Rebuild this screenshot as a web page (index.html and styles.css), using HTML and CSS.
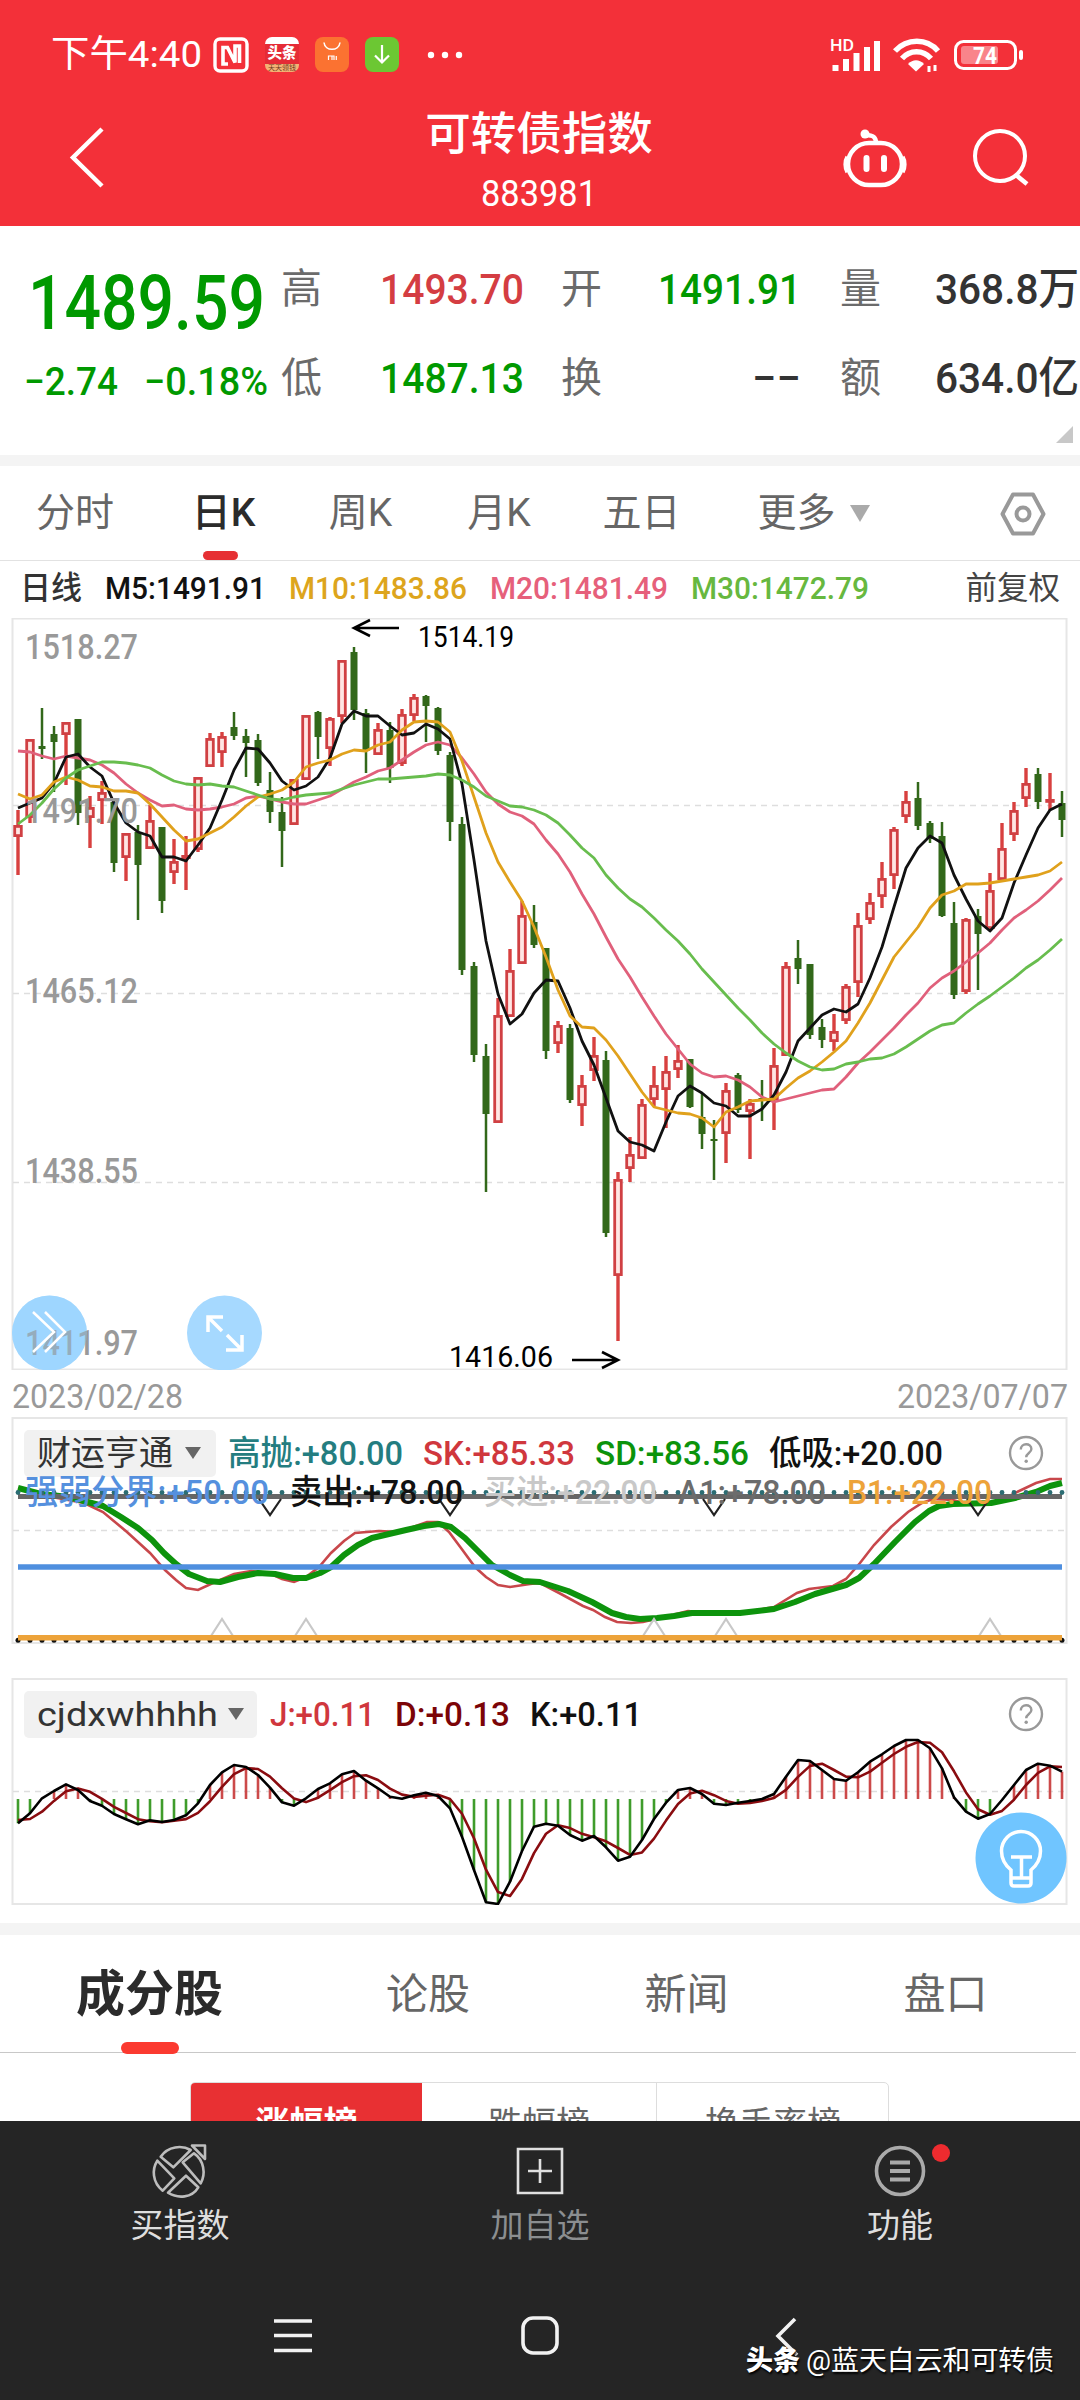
FILE: index.html
```html
<!DOCTYPE html>
<html lang="zh-CN">
<head>
<meta charset="utf-8">
<title>可转债指数 883981</title>
<link rel="stylesheet" href="styles.css">
</head>
<body>
<div class="phone">
  <header class="top">
    <div class="status">
      <span class="clock" data-width="151">下午4:40</span>
      <svg class="st-icon nfc" width="36" height="36" viewBox="0 0 36 36"><rect x="2" y="2" width="32" height="32" rx="5" fill="none" stroke="#fff" stroke-width="3.400"/><path d="M15 27H10V10.500H14.500L22 25.500V9H26.500V26" fill="none" stroke="#fff" stroke-width="3.600"/></svg>
      <span class="app news"><b>头条</b><i>天天领钱</i></span>
      <svg class="st-icon" width="34" height="35" viewBox="0 0 34 35"><rect width="34" height="35" rx="8" fill="#fb7231"/><path d="M9 5.500c1 9 15 9 16 0" fill="none" stroke="#fff" stroke-width="1.600"/><path d="M13.500 23v-4h3.500v4M17 19h2v4M21.300 19v4" fill="none" stroke="#fff" stroke-width="1.200"/></svg>
      <svg class="st-icon" width="34" height="35" viewBox="0 0 34 35"><rect width="34" height="35" rx="8" fill="#6cc733"/><path d="M17 8v17M10 18.500l7 7 7-7" fill="none" stroke="#fff" stroke-width="2.200"/></svg>
      <svg class="more-dots" width="36" height="8" viewBox="0 0 36 8"><circle cx="4" cy="4" r="3.200"/><circle cx="18" cy="4" r="3.200"/><circle cx="32" cy="4" r="3.200"/></svg>
      <svg class="signals" width="200" height="40" viewBox="826 34 200 40">
        <text x="830" y="50" class="hd" textLength="24" lengthAdjust="spacingAndGlyphs">HD</text>
        <path d="M835.500 70v-6M846 70v-12M856.500 70v-18M867 70v-24M877 70v-30" stroke="#fff" stroke-width="6" stroke-linecap="butt"/>
        <path d="M895 50c12-13 32-13 43 0M902 57.500c8-9 21-9 29 0" fill="none" stroke="#fff" stroke-width="5.500"/><path d="M908 63c5-5 11-5 16 0l-8 7.500z" fill="#fff"/><path d="M929 65v6M935 64v6" stroke="#fff" stroke-width="3"/>
        <rect x="955.500" y="40.500" width="60" height="27" rx="8" fill="none" stroke="#fff" stroke-width="3"/><rect x="961" y="45" width="37" height="18" rx="3" fill="#f9848a"/><rect x="1019" y="49" width="4" height="10" rx="2" fill="#fff"/>
        <text x="973" y="63" class="pct" textLength="24" lengthAdjust="spacingAndGlyphs">74</text>
      </svg>
    </div>
    <div class="titlebar">
      <svg class="back" width="40" height="64" viewBox="66 125 40 64"><path d="M102 129L73 157.500l29 28.500" fill="none" stroke="#fff" stroke-width="4.500"/></svg>
      <div class="title"><h1>可转债指数</h1><span data-width="116">883981</span></div>
      <svg width="70" height="64" viewBox="840 126 70 64"><g fill="none" stroke="#fff" stroke-width="4.500"><rect x="848" y="144" width="54" height="42" rx="21"/><path d="M866 136c8 0 10 3 10 8"/><path d="M866.500 159v11M884 159v11" stroke-width="6" stroke-linecap="round"/><path d="M847.500 158c-2.500 4-2.500 11 0 15M902.500 158c2.500 4 2.500 11 0 15"/></g><circle cx="865" cy="135" r="4.500" fill="#fff"/></svg>
      <svg class="search" width="60" height="64" viewBox="970 127 60 64"><circle cx="1000" cy="158" r="25" fill="none" stroke="#fff" stroke-width="4"/><path d="M1016 177l11 9" stroke="#fff" stroke-width="4.500"/></svg>
    </div>
  </header>

  <section class="quote">
    <div class="last">
      <div class="price"><span data-width="237">1489.59</span></div>
      <div class="change"><span data-width="94">−2.74</span><span data-width="124">−0.18%</span></div>
    </div>
    <dl class="stats">
      <dt>高</dt><dd class="up"><span data-width="144">1493.70</span></dd>
      <dt>开</dt><dd class="down"><span data-width="143">1491.91</span></dd>
      <dt>量</dt><dd><span data-width="144">368.8万</span></dd>
      <dt>低</dt><dd class="down"><span data-width="144">1487.13</span></dd>
      <dt>换</dt><dd><span data-width="49">−−</span></dd>
      <dt>额</dt><dd><span data-width="144">634.0亿</span></dd>
    </dl>
    <i class="corner"></i>
  </section>
  <div class="band"></div>

  <nav class="periods">
    <span>分时</span><span class="on">日K</span><span>周K</span><span>月K</span><span>五日</span><span class="more">更多<i></i></span>
    <svg width="46" height="44" viewBox="0 0 46 44"><path d="M13 2.500h20L43.500 22 33 41.500H13L2.500 22z" fill="none" stroke="#999" stroke-width="4" stroke-linejoin="round"/><circle cx="23" cy="22" r="6.500" fill="none" stroke="#999" stroke-width="4"/></svg>
  </nav>

  <div class="ma-row">
    <span class="c-dark" data-width="62">日线</span><span class="c-black" data-width="161">M5:1491.91</span><span class="c-gold" data-width="178">M10:1483.86</span><span class="c-pink" data-width="178">M20:1481.49</span><span class="c-lime" data-width="178">M30:1472.79</span><span class="adjust">前复权</span>
  </div>

  <div class="pane kline">
    <svg id="kline" width="1080" height="752" viewBox="0 618 1080 752">
      <rect x="12.500" y="618.500" width="1054" height="751" fill="#fff" stroke="#e6e6e6" stroke-width="2"/>
      <path class="grid" d="M13 805.500H1066M13 993.500H1066M13 1182.500H1066"/>
      <g id="candles"></g>
      <g id="averages" fill="none" stroke-width="2.800" stroke-linejoin="round"></g>
      <circle cx="49.500" cy="1333" r="37.500" fill="#a6d9ff"/>
      <g class="axis">
        <text x="25" y="659" textLength="113" lengthAdjust="spacingAndGlyphs">1518.27</text>
        <text x="25" y="823" textLength="113" lengthAdjust="spacingAndGlyphs">1491.70</text>
        <text x="25" y="1003" textLength="113" lengthAdjust="spacingAndGlyphs">1465.12</text>
        <text x="25" y="1183" textLength="113" lengthAdjust="spacingAndGlyphs">1438.55</text>
        <text x="25" y="1355" textLength="113" lengthAdjust="spacingAndGlyphs">1411.97</text>
      </g>
      <path d="M399 628H355M370 620l-16 8 16 8M572 1360H616M602 1352l16 8-16 8" fill="none" stroke="#000" stroke-width="2.600"/>
      <g class="mark">
        <text x="418" y="647" textLength="96" lengthAdjust="spacingAndGlyphs">1514.19</text>
        <text x="449" y="1367" textLength="104" lengthAdjust="spacingAndGlyphs">1416.06</text>
      </g>
      <circle cx="49.500" cy="1333" r="37.500" fill="#8fd0ff" fill-opacity=".35"/>
      <path d="M33 1312l21 20-21 20M45 1312l20 20-20 20" fill="none" stroke="#fff" stroke-width="2.500"/>
      <circle cx="224.500" cy="1333" r="37.500" fill="#a6d9ff"/>
      <path d="M208 1332v-15h15M208 1317l14 14M242 1335v15h-16M242 1350l-15-15" fill="none" stroke="#fff" stroke-width="3.500"/>
    </svg>
  </div>
  <div class="dates"><span data-width="171">2023/02/28</span><span data-width="171">2023/07/07</span></div>

  <div class="pane trend">
    <svg id="trend" width="1080" height="227" viewBox="0 1417 1080 227">
      <rect x="12.500" y="1418" width="1054" height="225" fill="#fff" stroke="#e6e6e6" stroke-width="2"/>
      <path class="grid" d="M13 1530.500H1066"/>
    </svg>
    <div class="legend first">
      <span class="pick"><span data-width="136">财运亨通</span><i></i></span>
      <span class="c-teal" data-width="175">高抛:+80.00</span><span class="c-red" data-width="152">SK:+85.33</span><span class="c-green" data-width="154">SD:+83.56</span><span class="c-black" data-width="174">低吸:+20.00</span>
      <svg class="help" width="36" height="36" viewBox="0 0 36 36"><circle cx="18" cy="18" r="16" fill="none" stroke="#999" stroke-width="2.400"/><path d="M12.800 14.500c0-7 10.600-7 10.600-.5 0 4-5.200 4-5.200 8.300" fill="none" stroke="#999" stroke-width="2.400"/><circle cx="18.200" cy="26.300" r="1.700" fill="#999"/></svg>
    </div>
    <div class="legend second">
      <span class="c-blue" data-width="244">强弱分界:+50.00</span><span class="c-black" data-width="173">卖出:+78.00</span><span class="c-silver" data-width="173">买进:+22.00</span><span class="c-gray" data-width="148">A1:+78.00</span><span class="c-orange" data-width="145">B1:+22.00</span>
    </div>
  </div>

  <div class="pane swing">
    <svg id="swing" width="1080" height="227" viewBox="0 1678 1080 227">
      <rect x="12.500" y="1679" width="1054" height="225" fill="#fff" stroke="#e6e6e6" stroke-width="2"/>
      <path class="grid" d="M13 1791.500H1066"/>
    </svg>
    <div class="legend third">
      <span class="pick wide"><span data-width="181">cjdxwhhhh</span><i></i></span>
      <span class="c-red" data-width="105">J:+0.11</span><span class="c-maroon" data-width="115">D:+0.13</span><span class="c-black" data-width="112">K:+0.11</span>
      <svg class="help" width="36" height="36" viewBox="0 0 36 36"><circle cx="18" cy="18" r="16" fill="none" stroke="#999" stroke-width="2.400"/><path d="M12.800 14.500c0-7 10.600-7 10.600-.5 0 4-5.200 4-5.200 8.300" fill="none" stroke="#999" stroke-width="2.400"/><circle cx="18.200" cy="26.300" r="1.700" fill="#999"/></svg>
    </div>
    <svg class="bulb" width="92" height="92" viewBox="0 0 92 92"><circle cx="46" cy="46" r="45.500" fill="#70c5ff"/><g fill="none" stroke="#fff" stroke-width="3.500"><path d="M36 64V58C30 53 26.500 47 26.500 39a19.500 19.500 0 0 1 39 0c0 8-3.500 14-9.500 19v6M36 62v9q0 3 3 3h14q3 0 3-3v-9M36 66h20M36 45h21M46.500 45v20"/></g></svg>
  </div>
  <div class="band lower"></div>

  <nav class="sections"><span class="on">成分股</span><span>论股</span><span>新闻</span><span>盘口</span></nav>
  <div class="ranks"><div class="seg"><span class="on">涨幅榜</span><span>跌幅榜</span><span>换手率榜</span></div></div>

  <footer class="bottom">
    <div class="actions">
      <div class="act">
        <svg width="60" height="58" viewBox="0 0 60 58"><g fill="none" stroke="#bdbdbd" stroke-width="2.600" stroke-linejoin="round"><path d="M10.700 14.700L23.300 25.300 40.700 8C32 3 18 4 10.700 14.700z"/><path d="M32.700 20.300L44 11.300C54 18 56 32 50.700 41.300z"/><path d="M7.300 18.700L24.300 36.300 12.700 48.700C2 40 2 27 7.300 18.700z"/><path d="M18 50.700L36 33.700 48.300 45.300C42 56 28 57 18 50.700z"/><path d="M42 3.500H55V17z"/></g></svg>
        <span>买指数</span>
      </div>
      <div class="act muted">
        <svg width="60" height="58" viewBox="0 0 60 58"><path d="M8 7h44v44H8zM30 17v24M18 29h24" fill="none" stroke="#e0e0e0" stroke-width="2.600"/></svg>
        <span>加自选</span>
      </div>
      <div class="act">
        <svg width="60" height="58" viewBox="0 0 60 58"><circle cx="30" cy="29" r="23.500" fill="none" stroke="#aaa" stroke-width="3.600"/><path d="M20 20.500h20M20 29h20M20 37.500h20" stroke="#aaa" stroke-width="4"/></svg>
        <span>功能</span><i class="dot"></i>
      </div>
    </div>
    <div class="sysnav">
      <svg width="1080" height="60" viewBox="0 2305 1080 60"><g fill="none" stroke="#f2f2f2" stroke-width="3.600"><path d="M274 2321h38M274 2335.500h38M274 2350.500h38"/><rect x="523" y="2318" width="34" height="35" rx="10"/><path d="M795 2319l-17 17 19 19"/></g></svg>
      <div class="credit"><b>头条</b><span data-width="248">@蓝天白云和可转债</span></div>
    </div>
  </footer>
</div>
<script src="app.js"></script>
</body>
</html>
```

FILE: styles.css
```css
* { box-sizing: border-box; margin: 0; padding: 0; }
body { width: 1080px; height: 2400px; overflow: hidden; background: #fff; color: #333; font-family: Roboto, "Noto Sans CJK SC", sans-serif; }
i, b { font-style: normal; }
[data-width] { display: inline-block; white-space: nowrap; transform-origin: 0 50%; flex: none; }
.phone { display: flex; flex-direction: column; width: 1080px; height: 2400px; overflow: hidden; }

.top { height: 226px; flex: none; background: #f33039; color: #fff; display: flex; flex-direction: column; }
.status { display: flex; align-items: center; height: 109px; padding-left: 51px; }
.clock { font-size: 37px; line-height: 54px; }
.st-icon { margin-right: 16px; flex: none; }
.nfc { margin-left: 11px; }
.app.news { width: 34px; height: 35px; margin-right: 16px; border-radius: 7px; overflow: hidden; display: flex; flex-direction: column; justify-content: flex-end; text-align: center; background: linear-gradient(#fff 0 7px, #e52b36 7px 27px, #f3b275 27px); }
.news b { font-size: 14.500px; line-height: 20px; font-weight: 900; white-space: nowrap; }
.news i { font-size: 7px; line-height: 8px; color: #703a20; white-space: nowrap; }
.more-dots { fill: #fff; margin-left: 12px; }
.signals { margin-left: auto; margin-right: 54px; }
.hd { font-size: 17px; fill: #fff; font-weight: 500; }
.pct { font-size: 24px; fill: #fff; font-weight: 700; }
.titlebar { display: flex; height: 100px; padding: 16px 50px 0 66px; }
.title { width: 300px; margin: -23px 0 0 283px; display: flex; flex-direction: column; align-items: center; }
.title h1 { font-size: 45.500px; font-weight: 500; line-height: 66px; white-space: nowrap; }
.title span { font-size: 37px; line-height: 44px; margin-top: 4px; }
.titlebar .back { flex: none; }
.title + svg { margin-left: 151px; flex: none; }
.search { margin-left: 60px; flex: none; }

.quote { height: 229px; flex: none; display: flex; position: relative; }
.last { width: 281px; flex: none; padding-top: 32px; color: #009900; }
.price { height: 91px; padding-left: 28px; font-size: 76px; line-height: 91px; font-weight: 500; }
.change { display: flex; gap: 26px; padding: 10px 0 0 24px; font-size: 39px; line-height: 46px; font-weight: 500; }
.stats { width: 798px; flex: none; display: grid; grid-template-columns: 40px 203px 78px 199px 80px 198px; grid-template-rows: 89px 89px; padding-top: 19px; }
.stats dt { font-size: 41px; line-height: 89px; color: #6b6b6b; text-align: right; height: 89px; }
.stats dd { display: flex; justify-content: flex-end; align-items: center; font-size: 43px; font-weight: 500; line-height: 89px; color: #333; }
.stats dd.up { color: #d43d42; }
.stats dd.down { color: #009900; }
.corner { position: absolute; right: 7px; bottom: 12px; border: solid transparent; border-width: 0 0 17px 17px; border-bottom-color: #c8c8c8; }
.band { height: 11px; flex: none; background: #f4f4f4; }

.periods { height: 95px; flex: none; border-bottom: 1px solid #e2e2e2; display: grid; grid-template-columns: 150px 147px 127px 150px 135px 200px 46px; align-items: center; font-size: 39px; color: #666; }
.periods > span { height: 94px; line-height: 95px; text-align: center; white-space: nowrap; }
.periods .on { color: #2b2b2b; font-weight: 500; position: relative; }
.periods .on::after { content: ""; position: absolute; left: 53px; bottom: 0; width: 35px; height: 9px; border-radius: 5px; background: #e63034; }
.periods .more { display: flex; align-items: center; justify-content: center; gap: 14px; padding-left: 9px; }
.more i { border: 10px solid transparent; border-top: 17px solid #aaa; border-bottom: 0; }
.periods svg { margin-left: 91px; margin-top: 2px; }

.ma-row { height: 57px; flex: none; display: flex; align-items: center; padding: 0 20px 1px 20px; font-size: 31.500px; font-weight: 500; line-height: 48px; }
.ma-row span + span { margin-left: 23px; }
.ma-row .adjust { margin-left: auto; color: #444; font-weight: 400; }

.pane { position: relative; flex: none; }
.pane > svg { display: block; }
.kline { height: 752px; }
.grid { stroke: #dedede; stroke-width: 1.500; stroke-dasharray: 6 5; fill: none; }
.axis { font-size: 35px; fill: #999; font-weight: 500; }
.mark { font-size: 30px; fill: #000; }
.dates { height: 47px; flex: none; display: flex; justify-content: space-between; padding: 0 12px; font-size: 34px; line-height: 53px; color: #999; }
.trend { height: 227px; }
.swing { height: 227px; margin-top: 34px; }
.legend { position: absolute; left: 0; width: 1080px; display: flex; align-items: center; font-size: 34px; font-weight: 500; line-height: 46px; height: 48px; }
.first { top: 12px; padding-left: 24px; gap: 20px; }
.second { top: 51px; padding-left: 25px; gap: 21px; }
.third { top: 12px; padding-left: 24px; gap: 20px; }
.pick { flex: none; width: 192px; height: 47px; padding-left: 13px; display: flex; align-items: center; gap: 12px; background: #f1f1f1; border-radius: 5px; color: #333; font-weight: 400; margin-right: -8px; }
.pick.wide { width: 233px; gap: 10px; margin-right: -7px; }
.pick i { border: 8px solid transparent; border-top: 12px solid #666; border-bottom: 0; }
.help { position: absolute; left: 1008px; top: 6px; }
.bulb { position: absolute; left: 975px; top: 134px; }
.c-dark { color: #333; } .c-black { color: #111; } .c-gold { color: #dda51d; } .c-pink { color: #e6607b; } .c-lime { color: #67b83f; }
.c-teal { color: #247d80; } .c-red { color: #d0373d; } .c-green { color: #0b930b; } .c-blue { color: #5590de; } .c-silver { color: #c8c8c8; }
.c-gray { color: #6c6c6c; } .c-orange { color: #eda33a; } .c-maroon { color: #7b0407; }

.lower { height: 12px; margin-top: 18px; }
.sections { height: 118px; flex: none; display: grid; grid-template-columns: 299px 258px 259px 259px; width: 1076px; border-bottom: 1px solid #c8c8c8; font-size: 42px; line-height: 119px; color: #666; text-align: center; }
.sections .on { position: relative; color: #2b2b2b; font-size: 49px; font-weight: 700; }
.sections .on::after { content: ""; position: absolute; left: 121px; bottom: 0; width: 58px; height: 12px; border-radius: 6px; background: #fb3a30; }
.ranks { height: 68px; flex: none; overflow: hidden; padding: 29px 0 0 190px; }
.seg { width: 699px; height: 82px; display: grid; grid-template-columns: 231px 234px 233px; border: 1px solid #ddd; border-radius: 5px; overflow: hidden; font-size: 34px; line-height: 82px; color: #666; text-align: center; }
.seg span + span + span { border-left: 1px solid #ddd; }
.seg .on { background: #e83033; color: #fff; font-weight: 700; }

.bottom { flex: 1; background: #252525; color: #dedede; display: flex; flex-direction: column; }
.actions { display: grid; grid-template-columns: repeat(3, 360px); padding-top: 21px; height: 184px; }
.act { position: relative; display: flex; flex-direction: column; align-items: center; font-size: 33px; line-height: 52px; }
.act.muted { color: #8b8e90; }
.dot { position: absolute; left: 212px; top: 2px; width: 18px; height: 18px; border-radius: 50%; background: #ee2b2f; }
.sysnav { position: relative; height: 60px; }
.sysnav svg { display: block; }
.credit { position: absolute; left: 746px; top: 36px; display: flex; align-items: center; gap: 6px; color: #fff; font-size: 27px; line-height: 40px; text-shadow: 1px 2px 2px #000; }
.credit b { font-weight: 900; }
```

FILE: app.js
```js
const NS = 'http://www.w3.org/2000/svg';
const X0 = 18, STEP = 12;
const px = i => X0 + STEP * i;

function add(parent, tag, attrs) {
  const el = document.createElementNS(NS, tag);
  for (const k in attrs) el.setAttribute(k, attrs[k]);
  parent.appendChild(el);
  return el;
}

// Each candle: direction, high, body top, body bottom, low
const candles = `r810,825,837,875 r739,739,818,823 g708,746,749,759 g726,734,742,792 r722,722,735,785 g719,719,813,825
r796,807,818,848 r781,792,801,824 g800,802,863,872 r833,833,858,881 g825,832,865,920 r805,820,849,849 g827,827,901,913
r839,861,873,884 r836,855,859,890 r777,777,850,852 r733,738,767,767 r732,736,753,767 g712,727,736,740 g729,736,743,777
g734,740,783,786 g772,790,812,823 g797,812,831,867 r779,779,825,825 r715,715,780,780 g711,712,737,759 r717,718,749,766
r660,660,717,723 g647,652,710,720 g709,713,751,773 r723,729,755,755 g722,730,768,783 r709,714,764,766 r694,697,716,721
g695,696,706,742 g707,708,751,755 g752,755,822,841 g817,824,970,975 g962,966,1055,1062 g1044,1056,1114,1192
r998,1015,1123,1123 r949,970,1017,1017 r901,915,964,964 g905,922,945,948 g948,948,1051,1059 r1021,1025,1044,1053
g1024,1028,1100,1103 r1075,1085,1106,1126 r1037,1055,1071,1081 g1051,1060,1233,1237 r1172,1179,1276,1341
r1137,1154,1169,1182 r1099,1104,1159,1159 r1066,1085,1100,1106 r1056,1071,1090,1128 r1045,1060,1070,1078
g1059,1059,1107,1108 g1093,1117,1134,1149 g1120,1139,1141,1180 r1083,1090,1134,1163 g1073,1075,1110,1113
r1099,1103,1112,1159 g1080,1098,1100,1121 r1048,1065,1100,1130 r962,966,1056,1056 g940,958,969,984 g964,964,1035,1039
g1019,1027,1040,1048 r1014,1031,1042,1051 r984,986,1021,1024 r913,925,983,997 r893,902,920,924 r862,878,897,908
r827,829,876,889 r791,801,817,823 g782,798,826,830 g821,823,839,843 g822,836,916,917 g902,923,995,999 r918,919,992,994
g909,916,934,990 r873,890,929,929 r823,848,880,880 r802,810,835,841 r768,783,799,807 g768,774,802,809 r773,799,801,810
g791,803,820,837`.split(/\s+/);

const box = document.getElementById('candles');
candles.forEach((c, i) => {
  const [h, t, b, l] = c.slice(1).split(',').map(Number), x = px(i);
  if (c[0] === 'g') {
    add(box, 'path', { d: `M${x} ${h}V${l}`, stroke: '#32681a', 'stroke-width': 2.5 });
    add(box, 'rect', { x: x - 3.5, y: t, width: 7, height: b - t, fill: '#32681a' });
  } else {
    add(box, 'path', { d: `M${x} ${h}V${t}M${x} ${b}V${l}`, stroke: '#d8403f', 'stroke-width': 3.4 });
    add(box, 'rect', { x: x - 3.3, y: t + 1.4, width: 6.6, height: Math.max(1, b - t - 2.8), fill: '#ffe6e4', stroke: '#d04043', 'stroke-width': 2.8 });
  }
});

const averages = {
  '#e0607b': [751,752,756,759,756,758,760,765,773,784,793,800,806,805,809,810,809,807,804,798,796,799,802,804,804,800,796,789,782,777,771,768,760,752,745,742,745,758,774,792,804,812,816,824,840,854,872,894,914,937,959,977,997,1016,1034,1049,1064,1073,1077,1076,1080,1087,1097,1102,1099,1096,1093,1090,1089,1077,1063,1052,1040,1028,1015,1003,988,978,971,962,953,943,930,918,910,901,890,878],
  '#111': [808,803,798,783,757,754,767,776,803,823,832,836,857,857,861,845,828,800,770,748,749,763,781,790,786,777,758,724,711,716,716,726,735,733,724,729,739,784,860,941,994,1024,1014,993,980,981,1008,1041,1065,1098,1131,1142,1145,1151,1122,1096,1086,1093,1103,1106,1116,1116,1109,1095,1072,1041,1028,1015,1009,1012,1004,978,947,907,868,848,836,843,875,899,921,931,918,883,855,828,810,804],
  '#e0a11c': [794,799,795,782,777,780,786,787,791,791,793,804,817,830,841,839,833,827,817,806,797,794,790,782,767,763,760,754,750,751,745,742,730,722,721,722,732,761,797,833,862,882,901,927,957,990,1016,1027,1028,1040,1056,1074,1092,1107,1110,1113,1114,1118,1127,1112,1107,1101,1100,1099,1088,1078,1071,1062,1052,1041,1023,1003,980,957,942,927,908,895,891,884,884,883,881,879,877,875,871,862],
  '#68bd4e': [824,815,803,789,778,770,766,762,762,763,765,768,775,781,784,785,784,786,787,791,795,799,800,797,795,794,793,789,785,782,779,779,778,777,776,774,775,780,787,796,801,806,807,810,815,823,835,848,858,875,888,899,907,918,930,941,954,969,982,995,1008,1020,1033,1044,1053,1061,1067,1070,1069,1064,1062,1059,1058,1054,1047,1039,1031,1025,1023,1013,1004,996,987,978,968,960,950,939]
};
const lines = document.getElementById('averages');
for (const color in averages)
  add(lines, 'polyline', { points: averages[color].map((y, i) => `${px(i)},${y}`).join(' '), stroke: color });

// Trend pane: x,y pairs
const sd = [[18,1488],[41,1494],[69,1497],[84,1501],[103,1506],[121,1517],[138,1528],[152,1540],[164,1553],[176,1564],[189,1574],[207,1581],[220,1582],[238,1577],[258,1573],[275,1574],[293,1578],[306,1578],[320,1573],[331,1567],[344,1555],[358,1545],[372,1538],[389,1534],[406,1530],[424,1526],[439,1524],[451,1527],[465,1538],[479,1552],[492,1565],[510,1575],[523,1581],[540,1582],[568,1591],[592,1602],[612,1613],[626,1617],[640,1619],[657,1618],[674,1616],[692,1613],[740,1613],[774,1609],[795,1602],[815,1594],[846,1585],[859,1578],[874,1564],[895,1542],[915,1522],[929,1511],[939,1506],[953,1504],[991,1503],[1015,1498],[1036,1492],[1050,1486],[1062,1483]];
const sk = [[18,1488],[52,1497],[84,1503],[103,1512],[127,1532],[150,1553],[165,1570],[176,1580],[186,1588],[198,1590],[213,1583],[234,1574],[251,1571],[269,1573],[282,1579],[294,1582],[306,1577],[319,1567],[331,1553],[344,1541],[355,1533],[379,1531],[401,1532],[413,1527],[427,1522],[438,1522],[449,1532],[461,1548],[475,1567],[486,1577],[498,1585],[510,1587],[530,1584],[540,1583],[561,1594],[583,1606],[593,1610],[605,1617],[617,1622],[631,1623],[643,1622],[664,1617],[688,1611],[712,1613],[740,1613],[774,1607],[797,1593],[809,1589],[833,1586],[846,1579],[860,1563],[874,1545],[891,1527],[908,1512],[922,1503],[933,1499],[953,1500],[967,1504],[988,1504],[1001,1501],[1015,1493],[1036,1483],[1050,1479],[1062,1479]];
const trend = document.getElementById('trend');
add(trend, 'polyline', { points: sk.join(' '), fill: 'none', stroke: '#c8474b', 'stroke-width': 2.6 });
add(trend, 'polyline', { points: sd.join(' '), fill: 'none', stroke: '#0d930c', 'stroke-width': 6, 'stroke-linejoin': 'round' });
add(trend, 'path', { d: 'M18 1567H1062', stroke: '#4f8fdf', 'stroke-width': 5.5 });
add(trend, 'path', { d: 'M18 1496.500H1062', stroke: '#666', 'stroke-width': 5 });
for (let i = 0; i < 88; i++) add(trend, 'circle', { cx: px(i), cy: 1492.5, r: 2.4, fill: '#2b6d73' });
for (const x of [270, 450, 714, 978]) add(trend, 'path', { d: `M${x - 11} 1499l11 16 11-16`, fill: 'none', stroke: '#222', 'stroke-width': 2.2 });
for (const x of [222, 306, 654, 726, 990]) add(trend, 'path', { d: `M${x - 11} 1636l11-17 11 17`, fill: 'none', stroke: '#c8c8c8', 'stroke-width': 2.2 });
for (let i = 0; i < 88; i++) add(trend, 'circle', { cx: px(i), cy: 1640.3, r: 2.5, fill: '#111' });
add(trend, 'path', { d: 'M18 1637.700H1062', stroke: '#eda33a', 'stroke-width': 5.4 });

// Swing pane: K values below the pane origin, D is their three-point mean
const k = [490,460,415,393,373,390,423,437,462,478,493,481,486,480,466,430,375,337,315,321,345,383,427,437,415,387,370,343,333,362,385,410,416,406,398,408,445,530,630,727,732,665,573,500,491,497,525,542,528,562,602,590,540,477,428,390,384,402,431,435,428,423,417,402,350,300,303,330,357,362,337,305,283,258,240,240,265,325,412,455,476,462,420,375,330,311,317,335].map(v => 1660 + v / 3);
const swing = document.getElementById('swing');
k.forEach((y, i) => {
  if (Math.abs(y - 1799) > 1) add(swing, 'path', { d: `M${px(i)} 1799V${y}`, stroke: y < 1799 ? '#cc4a4a' : '#3f9c2b', 'stroke-width': 2.6 });
});
const d = k.map((y, i) => i < 2 ? (i ? 1819 : 1820) : (y + k[i - 1] + k[i - 2]) / 3);
for (const [series, color] of [[d, '#8a0c10'], [k, '#000']])
  add(swing, 'polyline', { points: series.map((y, i) => `${px(i)},${y.toFixed(1)}`).join(' '), fill: 'none', stroke: color, 'stroke-width': 2.6, 'stroke-linejoin': 'round' });

document.querySelectorAll('[data-width]').forEach(el => {
  const natural = el.getBoundingClientRect().width, wanted = Number(el.dataset.width);
  el.style.transform = `scaleX(${wanted / natural})`;
  el.style.marginRight = `${wanted - natural}px`;
});
```
